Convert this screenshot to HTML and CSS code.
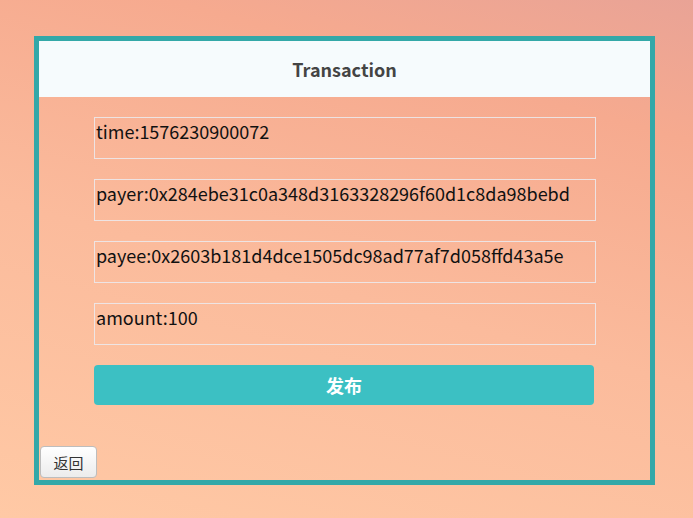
FILE: index.html
```html
<!DOCTYPE html>
<html>
<head>
<meta charset="utf-8">
<link rel="stylesheet" href="styles.css">
</head>
<body>
<div class="page">
  <div class="panel">
    <div class="header">Transaction</div>
    <div class="form">
      <div class="field">time:1576230900072</div>
      <div class="field">payer:0x284ebe31c0a348d3163328296f60d1c8da98bebd</div>
      <div class="field">payee:0x2603b181d4dce1505dc98ad77af7d058ffd43a5e</div>
      <div class="field">amount:100</div>
      <button class="publish">发布</button>
    </div>
    <div class="footer">
      <button class="back">返回</button>
    </div>
  </div>
</div>
</body>
</html>
```

FILE: styles.css
```css
html, body {
  margin: 0;
  padding: 0;
  height: 100%;
}
body {
  background: linear-gradient(15deg, #ffc9a5 0%, #fbbb9c 45%, #f6aa8f 80%, #e9a396 100%);
  font-family: "Noto Sans CJK SC", "Noto Sans", sans-serif;
}
.page {
  padding: 36px 0 0 34px;
}
.panel {
  width: 611px;
  height: 439px;
  border: 5px solid #33a8a8;
  display: flex;
  flex-direction: column;
}
.header {
  height: 56px;
  background: #f6fbfd;
  color: #444;
  font-weight: bold;
  font-size: 18px;
  display: flex;
  align-items: center;
  justify-content: center;
}
.form {
  display: flex;
  flex-direction: column;
  gap: 20px;
  padding: 20px 0 0 55px;
}
.field {
  width: 498px;
  height: 40px;
  border: 1px solid rgba(235, 235, 240, 0.85);
  padding: 0 1px;
  box-sizing: content-box;
  font-size: 18px;
  line-height: 26px;
  color: #111;
}
.publish {
  width: 500px;
  height: 40px;
  border: none;
  border-radius: 4px;
  background: #3cc0c3;
  color: #fff;
  font-family: "Noto Sans CJK SC", sans-serif;
  font-weight: bold;
  font-size: 18px;
  padding: 0;
}
.footer {
  margin-top: auto;
  padding: 0 0 2px 1px;
}
.back {
  width: 57px;
  height: 32px;
  border: 1px solid #bdbdbd;
  border-radius: 4px;
  background: linear-gradient(#ffffff, #ececec);
  color: #333;
  font-family: "Noto Sans CJK SC", sans-serif;
  font-size: 15px;
  padding: 0;
}
```
